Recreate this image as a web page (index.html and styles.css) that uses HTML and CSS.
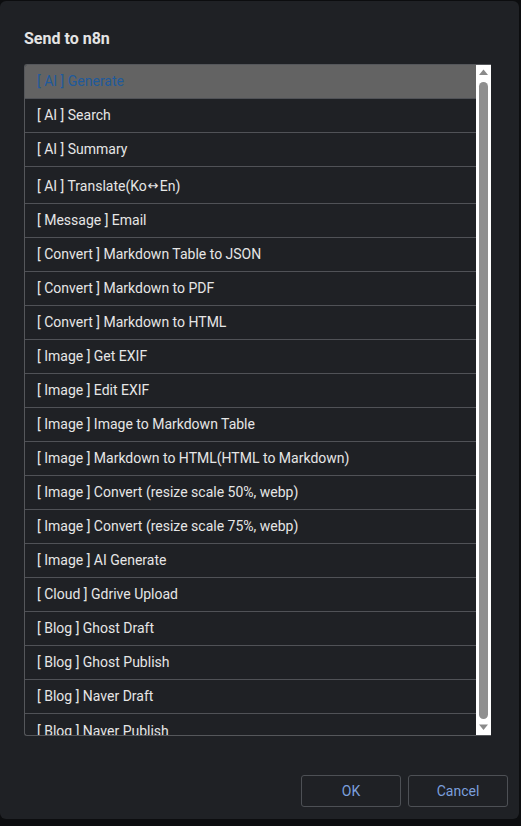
FILE: index.html
```html
<!DOCTYPE html>
<html lang="en">
<head>
<meta charset="utf-8">
<title>Send to n8n</title>
<link rel="stylesheet" href="styles.css">
</head>
<body>
<div class="dialog">
  <h1 class="title">Send to n8n</h1>
  <div class="listbox">
    <ul class="list">
      <li class="row selected">[ AI ] Generate</li>
      <li class="row">[ AI ] Search</li>
      <li class="row">[ AI ] Summary</li>
      <li class="row tall">[ AI ] Translate(Ko<span class="sym">↔</span>En)</li>
      <li class="row">[ Message ] Email</li>
      <li class="row">[ Convert ] Markdown Table to JSON</li>
      <li class="row">[ Convert ] Markdown to PDF</li>
      <li class="row">[ Convert ] Markdown to HTML</li>
      <li class="row">[ Image ] Get EXIF</li>
      <li class="row">[ Image ] Edit EXIF</li>
      <li class="row">[ Image ] Image to Markdown Table</li>
      <li class="row">[ Image ] Markdown to HTML(HTML to Markdown)</li>
      <li class="row">[ Image ] Convert (resize scale 50%, webp)</li>
      <li class="row">[ Image ] Convert (resize scale 75%, webp)</li>
      <li class="row">[ Image ] AI Generate</li>
      <li class="row">[ Cloud ] Gdrive Upload</li>
      <li class="row">[ Blog ] Ghost Draft</li>
      <li class="row">[ Blog ] Ghost Publish</li>
      <li class="row">[ Blog ] Naver Draft</li>
      <li class="row last">[ Blog ] Naver Publish</li>
    </ul>
    <div class="scrollbar">
      <svg class="arrow" width="15" height="17" viewBox="0 0 15 17"><path d="M3 11 L7.5 5.5 L12 11 Z" fill="#8a8a8a"/></svg>
      <div class="thumb"></div>
      <svg class="arrow" width="15" height="17" viewBox="0 0 15 17"><path d="M3 5.5 L7.5 11 L12 5.5 Z" fill="#8a8a8a"/></svg>
    </div>
  </div>
  <div class="actions">
    <button class="btn">OK</button>
    <button class="btn">Cancel</button>
  </div>
</div>
</body>
</html>
```
FILE: styles.css
```css
html, body {
  margin: 0;
  padding: 0;
}
body {
  background: #0c0d0f;
  width: 521px;
  height: 826px;
  overflow: hidden;
  font-family: Roboto, "Liberation Sans", Arial, sans-serif;
}
.dialog {
  box-sizing: border-box;
  width: 519px;
  height: 818px;
  margin-top: 1px;
  background: #1f2125;
  border-radius: 6px;
  padding: 28px 11px 12px 24px;
  display: flex;
  flex-direction: column;
}
.title {
  margin: 0;
  font-size: 16px;
  font-weight: 700;
  color: #e4e4e4;
  line-height: 19px;
}
.listbox {
  margin-top: 16px;
  width: 467px;
  height: 672px;
  box-sizing: border-box;
  border: 1px solid #55575b;
  border-right: none;
  border-radius: 3px 0 0 3px;
  display: flex;
  overflow: hidden;
}
.list {
  list-style: none;
  margin: 0;
  padding: 0;
  flex: 1;
  overflow: hidden;
}
.row {
  box-sizing: border-box;
  height: 34px;
  padding: 0 12px 2px;
  display: flex;
  align-items: center;
  border-bottom: 1px solid #505257;
  color: #e6e6e6;
  font-size: 14px;
  white-space: nowrap;
}
.row.tall {
  height: 37px;
  padding-top: 3px;
}
.row.last {
  padding-top: 3px;
}
.sym {
  font-family: "DejaVu Sans", sans-serif;
  font-size: 13px;
  padding: 0 1px;
}
.row.selected {
  background: #636363;
  color: #1f5a9b;
}
.scrollbar {
  width: 15px;
  background: #ffffff;
  display: flex;
  flex-direction: column;
  align-items: center;
  margin-top: -1px;
  margin-bottom: -1px;
}
.arrow {
  display: block;
  flex: none;
}
.thumb {
  flex: 1;
  width: 9px;
  margin: 1px 0 0;
  background: #8f8f8f;
  border-radius: 5px;
}
.actions {
  margin-top: auto;
  display: flex;
  justify-content: flex-end;
  gap: 7px;
}
.btn {
  width: 100px;
  height: 32px;
  box-sizing: border-box;
  background: #1f2125;
  border: 1px solid #4d5055;
  border-radius: 3px;
  color: #7b9fdc;
  font-family: Roboto, "Liberation Sans", Arial, sans-serif;
  font-size: 14px;
  padding: 0;
}
```
